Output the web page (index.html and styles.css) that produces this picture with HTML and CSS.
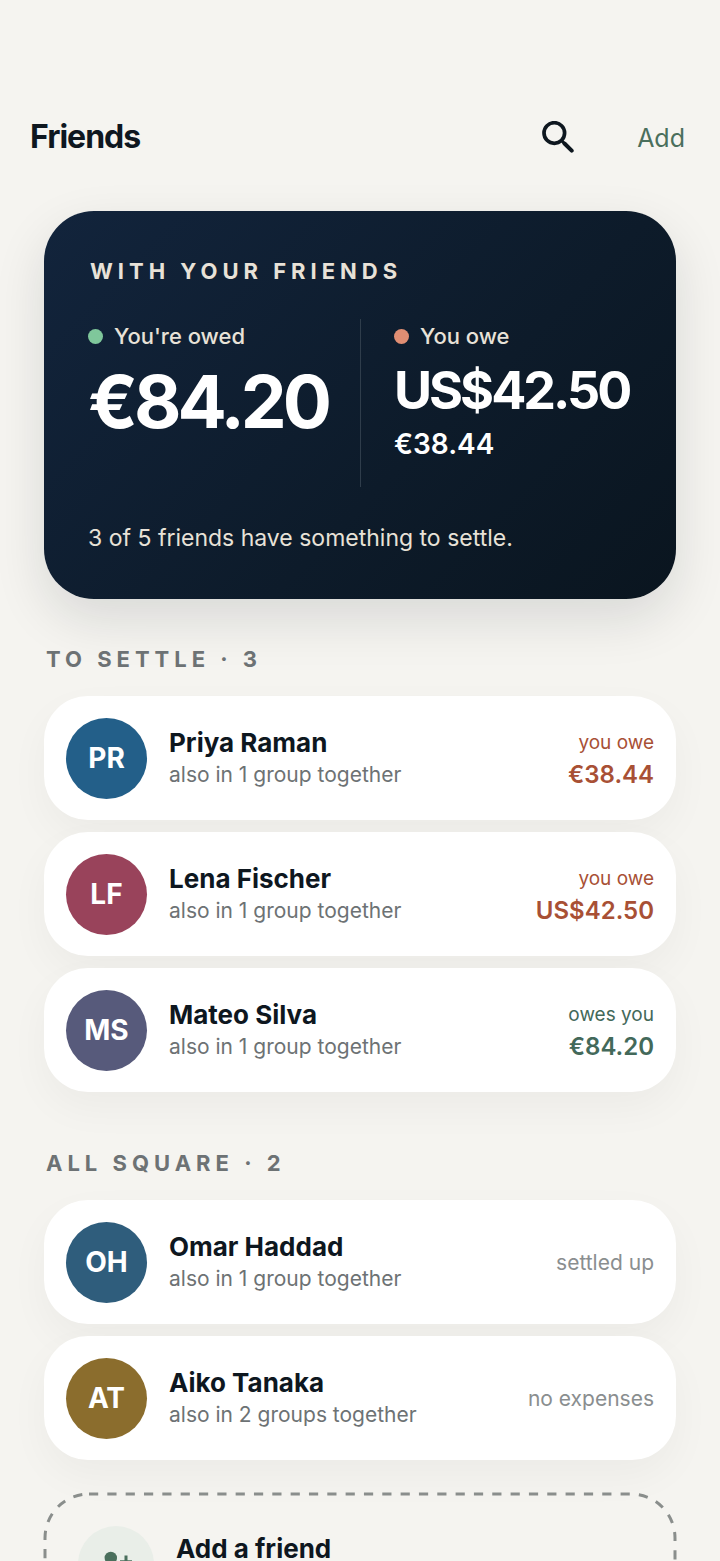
FILE: index.html
```html
<!DOCTYPE html>
<html lang="en">
<head>
<meta charset="utf-8">
<meta name="viewport" content="width=device-width, initial-scale=1">
<title>Friends</title>
<link rel="stylesheet" href="styles.css">
</head>
<body>
<div class="screen">
  <header class="topbar">
    <h1 class="topbar-title">Friends</h1>
    <button class="icon-button" type="button" aria-label="Search">
      <svg class="search-icon" viewBox="0 0 32 32" aria-hidden="true">
        <circle cx="12.3" cy="12" r="10.3" stroke-width="3.7"/>
        <path d="M20 20l3 3" stroke-width="3"/>
        <path d="M22.5 22.500l7.200 7.200" stroke-width="4"/>
      </svg>
    </button>
    <button class="text-button" type="button">Add</button>
  </header>
  <main class="content">
    <section class="summary">
      <h2 class="summary-title">With your friends</h2>
      <div class="balances">
        <div class="balance">
          <p class="balance-label"><span class="dot dot-in"></span>You're owed</p>
          <p class="balance-large">€84.20</p>
        </div>
        <div class="balance balance-divided">
          <p class="balance-label"><span class="dot dot-out"></span>You owe</p>
          <p class="balance-medium">US$42.50</p>
          <p class="balance-small">€38.44</p>
        </div>
      </div>
      <p class="summary-note">3 of 5 friends have something to settle.</p>
    </section>

    <section class="group">
      <h2 class="group-title">To settle · 3</h2>
      <ul class="friends">
        <li class="friend">
          <span class="avatar avatar-blue">PR</span>
          <div class="who"><h3 class="name">Priya Raman</h3><p class="detail">also in 1 group together</p></div>
          <div class="status status-owe"><p class="status-label">you owe</p><p class="amount">€38.44</p></div>
        </li>
        <li class="friend">
          <span class="avatar avatar-rose">LF</span>
          <div class="who"><h3 class="name">Lena Fischer</h3><p class="detail">also in 1 group together</p></div>
          <div class="status status-owe"><p class="status-label">you owe</p><p class="amount">US$42.50</p></div>
        </li>
        <li class="friend">
          <span class="avatar avatar-violet">MS</span>
          <div class="who"><h3 class="name">Mateo Silva</h3><p class="detail">also in 1 group together</p></div>
          <div class="status status-owed"><p class="status-label">owes you</p><p class="amount">€84.20</p></div>
        </li>
      </ul>
    </section>

    <section class="group">
      <h2 class="group-title">All square · 2</h2>
      <ul class="friends">
        <li class="friend">
          <span class="avatar avatar-teal">OH</span>
          <div class="who"><h3 class="name">Omar Haddad</h3><p class="detail">also in 1 group together</p></div>
          <p class="status status-none">settled up</p>
        </li>
        <li class="friend">
          <span class="avatar avatar-gold">AT</span>
          <div class="who"><h3 class="name">Aiko Tanaka</h3><p class="detail">also in 2 groups together</p></div>
          <p class="status status-none">no expenses</p>
        </li>
      </ul>
    </section>

    <button class="add-friend" type="button">
      <svg class="add-outline" aria-hidden="true"><rect class="add-outline-rect" x="1" y="1" rx="44" stroke-dasharray="9.2 9.13"/></svg>
      <span class="add-badge">
        <svg class="add-icon" viewBox="0 0 32 32" aria-hidden="true">
          <circle cx="10.800" cy="10" r="6.200"/>
          <path d="M0 26c0-5 5-8 11-8s11 3 11 8v2H0z"/>
          <path d="M24.500 7.500h3v4.800h4.500v3h-4.500v4.500h-3v-4.500h-4.500v-3h4.500z"/>
        </svg>
      </span>
      <span class="name">Add a friend</span>
    </button>
  </main>
</div>
</body>
</html>
```
FILE: styles.css
```css
* { box-sizing: border-box; margin: 0; padding: 0; }

body {
  background: #f5f4f0;
  color: #0e171f;
  font-family: Inter, "Liberation Sans", sans-serif;
}

button { border: 0; background: none; color: inherit; font: inherit; cursor: pointer; }

.screen {
  height: 100vh;
  overflow-x: hidden;
  overflow-y: auto;
  scrollbar-width: none;
}

.topbar {
  display: flex;
  align-items: center;
  padding: 113px 35px 50px 30px;
}
.topbar-title {
  flex: 1;
  font-size: 32px;
  line-height: 48px;
  font-weight: 700;
  letter-spacing: -1px;
}
.icon-button { display: flex; padding: 8px; margin-right: 55px; }
.search-icon {
  width: 32px;
  height: 32px;
  fill: none;
  stroke: #0e171f;
  stroke-linecap: round;
}
.text-button { padding-top: 2px; color: #4a6f5c; font-size: 25px; line-height: 46px; }

.content { padding: 0 44px 44px; }

.summary {
  padding: 44px;
  border-radius: 50px;
  background: linear-gradient(135deg, #12243c 0%, #0d1b2a 60%, #0a151f 100%);
  box-shadow: 0 20px 52px rgba(14, 23, 31, 0.12);
  color: #fff;
}
.summary-title {
  padding-left: 2px;
  color: #e8e2d8;
  font-size: 22px;
  line-height: 32px;
  font-weight: 700;
  letter-spacing: 5px;
  text-transform: uppercase;
}
.balances {
  display: grid;
  grid-template-columns: minmax(0, 1fr) minmax(0, 1fr);
  min-height: 168px;
  margin: 32px 0;
}
.balance-divided { padding-left: 33px; border-left: 1px solid #2f3d4b; }
.balance-label {
  display: flex;
  align-items: center;
  gap: 11px;
  color: #e8e2d8;
  font-size: 22px;
  line-height: 34px;
  font-weight: 500;
}
.dot { width: 15px; height: 15px; border-radius: 50%; }
.dot-in { background: #7fc79b; }
.dot-out { background: #e08e73; }
.balance-large {
  font-size: 73px;
  line-height: 98px;
  font-weight: 700;
  letter-spacing: -4px;
}
.balance-medium {
  font-size: 52px;
  line-height: 76px;
  font-weight: 700;
  letter-spacing: -3px;
}
.balance-small { font-size: 28px; line-height: 30px; font-weight: 600; }
.summary-note { padding-top: 2px; color: #e8e2d8; font-size: 23px; line-height: 34px; }

.group { padding-top: 44px; }
.group + .group { padding-top: 55px; }
.group-title {
  padding: 0 2px 21px;
  color: #6d7274;
  font-size: 22px;
  line-height: 32px;
  font-weight: 700;
  letter-spacing: 5px;
  text-transform: uppercase;
}
.friends { display: grid; gap: 12px; list-style: none; }
.friend {
  display: flex;
  align-items: center;
  gap: 22px;
  min-height: 124px;
  padding: 16px 22px;
  border-radius: 44px;
  background: #fff;
  box-shadow: 0 16px 40px rgba(14, 23, 31, 0.04);
}
.avatar {
  display: grid;
  place-items: center;
  flex-shrink: 0;
  width: 81px;
  height: 81px;
  border-radius: 50%;
  color: #fff;
  font-size: 28px;
  font-weight: 700;
}
.avatar-blue { background: #235f89; }
.avatar-rose { background: #99435b; }
.avatar-violet { background: #575a7b; }
.avatar-teal { background: #2f5d7c; }
.avatar-gold { background: #8b6d2d; }
.who { flex: 1; min-width: 0; padding-top: 2px; }
.name { font-size: 26px; line-height: 32px; font-weight: 700; }
.detail { color: #6d7274; font-size: 21px; line-height: 32px; }
.status { padding-top: 2px; text-align: right; line-height: 32px; }
.status-label { font-size: 19px; }
.status-owe { color: #a85035; }
.status-owed { color: #43695a; }
.status-none { color: #8a8e8f; font-size: 21px; }
.amount { font-size: 24px; font-weight: 600; }

.add-friend {
  position: relative;
  display: flex;
  align-items: flex-start;
  gap: 22px;
  width: 100%;
  margin-top: 33px;
  padding: 33px 34px;
  text-align: left;
}
.add-outline { position: absolute; inset: 0; width: 100%; height: 100%; overflow: visible; }
.add-outline-rect {
  width: calc(100% - 2px);
  height: calc(100% - 2px);
  fill: none;
  stroke: #8a8e8c;
  stroke-width: 3px;
}
.add-badge {
  display: grid;
  place-items: center;
  width: 76px;
  height: 76px;
  border-radius: 50%;
  background: #e9eee8;
}
.add-icon { width: 32px; height: 32px; fill: #4a6f5c; }
.add-friend .name { padding-top: 7px; }
```
